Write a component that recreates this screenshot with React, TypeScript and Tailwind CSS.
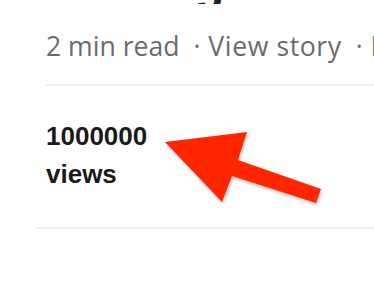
import React from "react";

export default function App() {
  return (
    <div className="relative w-[374px] h-[296px] bg-white overflow-hidden">
      <div className="h-[4px] overflow-hidden pl-[195px]">
        <div
          className="text-[48px] font-bold leading-none text-[#242424] mt-[-40px]"
          style={{ fontFamily: '"Liberation Sans", Arial, sans-serif' }}
        >
          g
        </div>
      </div>
      <div className="pl-[46px]">
        <div
          className="mt-[24px] whitespace-nowrap text-[26.6px] leading-[36px] text-[#6b6b6b]"
          style={{ fontFamily: '"Open Sans", sans-serif' }}
        >
          2 min read <span className="ml-[7px] mr-[1px]">·</span>{" "}
          <span className="tracking-[0.6px]">View story</span>{" "}
          <span className="ml-[7px] mr-[1px]">·</span> I
        </div>
        <div className="mt-[20px] h-[2px] bg-[#f0f0f0]" />
        <div
          className="mt-[31px] text-[26px] font-bold leading-[38px] text-[#1a1a1a]"
          style={{ fontFamily: '"Liberation Sans", Arial, sans-serif' }}
        >
          <div>1000000</div>
          <div>views</div>
        </div>
      </div>
      <div className="ml-[36px] mt-[34px] h-[2px] bg-[#f0f0f0]" />
      <svg
        className="absolute left-0 top-0"
        width="374"
        height="296"
        viewBox="0 0 374 296"
      >
        <defs>
          <filter id="sh" x="-20%" y="-20%" width="140%" height="140%">
            <feDropShadow dx="1" dy="2" stdDeviation="1.5" floodColor="#000" floodOpacity="0.25" />
          </filter>
        </defs>
        <polygon
          points="165,142 247,132 238,160 321,189 316,203 232,176 222,202"
          fill="#ff2600"
          filter="url(#sh)"
        />
      </svg>
    </div>
  );
}
